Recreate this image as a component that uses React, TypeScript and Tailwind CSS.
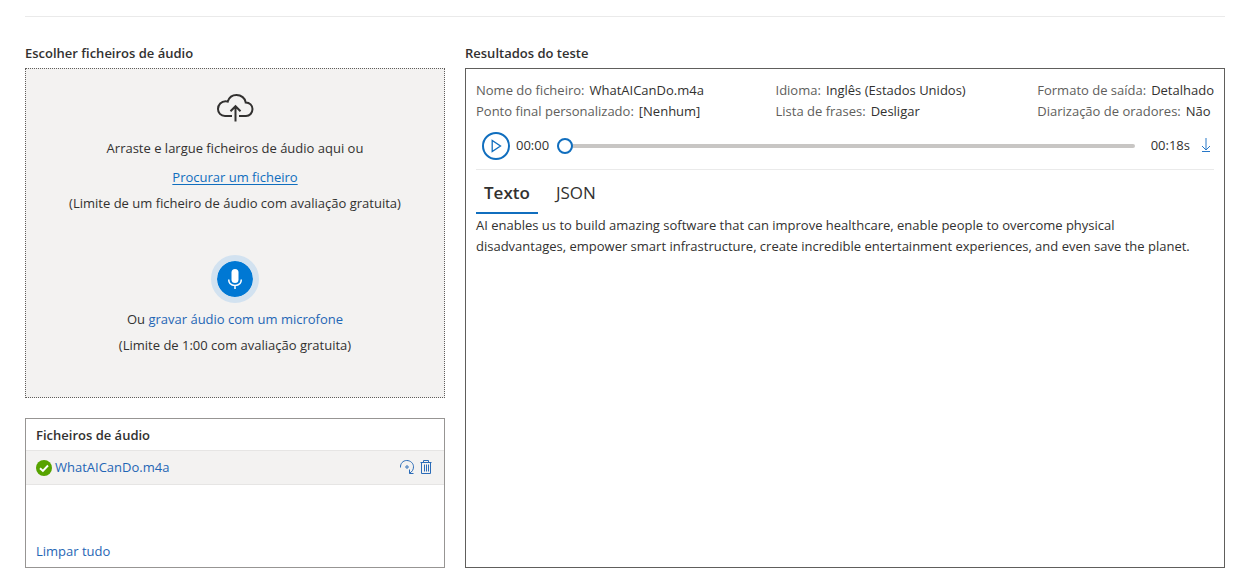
import { useState } from "react";

const transcript =
  "AI enables us to build amazing software that can improve healthcare, enable people to overcome physical disadvantages, empower smart infrastructure, create incredible entertainment experiences, and even save the planet.";

function CloudUpload() {
  return (
    <svg width="38" height="30" viewBox="0 0 38 30" fill="none" stroke="#323130" strokeWidth="2" aria-hidden="true">
      <path d="M16 23H9C4.700 23 2 19.800 2 15.900C2 11.600 5.400 8.200 9.500 8.200C10.300 8.200 11 8.300 11.700 8.600C13 4.700 16.500 2 20.500 2C25.200 2 29.200 5.200 29.700 9.400C33.700 9.400 36.500 12.400 36.500 16C36.500 20 33.700 23 30 23H23" />
      <path d="M19.500 28.500V13.500M14.500 18.200L19.500 13.200L24.500 18.200" />
    </svg>
  );
}

function Microphone() {
  return (
    <svg width="16" height="22" viewBox="0 0 16 22" fill="none" aria-hidden="true">
      <rect x="4.500" y="1" width="7" height="14" rx="3.500" fill="white" />
      <path d="M1.700 11.500C1.700 15.200 4.300 17.400 8 17.400C11.700 17.400 14.300 15.200 14.300 11.500M8 17.400V21" stroke="white" strokeWidth="1.500" />
    </svg>
  );
}

function Success() {
  return (
    <svg width="16" height="16" viewBox="0 0 16 16" fill="none" aria-hidden="true">
      <circle cx="8" cy="8" r="8" fill="#57a300" />
      <path d="M4 8.200L6.900 11L12 5.500" stroke="white" strokeWidth="1.900" />
    </svg>
  );
}

function Rerun() {
  return (
    <svg width="16" height="16" viewBox="0 0 16 16" fill="none" stroke="#2b6cb8" aria-hidden="true">
      <path d="M1.500 8.500C1.200 4.500 4 1.500 7.700 1.500C11.500 1.500 14.500 4.300 14.500 7.800C14.500 10.700 13 13 10.500 14.200" />
      <path d="M10.500 10.500V14.500H14.500" />
      <circle cx="8" cy="8" r="1.200" />
    </svg>
  );
}

function Trash() {
  return (
    <svg width="12" height="16" viewBox="0 0 12 16" fill="none" stroke="#2b6cb8" aria-hidden="true">
      <path d="M0.500 3.500H11.500M3.500 3V1.500H8.500V3M1.500 3.500V14.500H10.500V3.500M4.500 5.500V12.500M6.500 5.500V12.500M8.500 5.500V12.500" />
    </svg>
  );
}

function Field({ label, value }: { label: string; value: string }) {
  return (
    <div className="flex gap-[5px] whitespace-nowrap">
      <dt className="text-[#605e5c]">{label}</dt>
      <dd>{value}</dd>
    </div>
  );
}

export default function App() {
  const [tab, setTab] = useState<"text" | "json">("text");
  const [position, setPosition] = useState(0);

  return (
    <main className="bg-white pt-4 pr-5 pb-[10px] pl-[25px] font-['Open_Sans','Noto_Sans',sans-serif] text-[13px] leading-[21px] text-[#323130]">
      <hr className="border-[#eaeaea]" />
      <div className="mt-[26px] flex gap-5">
        <section className="flex w-[420px] shrink-0 flex-col">
          <h2 className="mb-1 font-semibold">Escolher ficheiros de áudio</h2>
          <div className="flex min-h-[330px] flex-col items-center border border-dotted border-[#605e5c] bg-[#f3f2f1] pt-6 text-center">
            <CloudUpload />
            <p className="mt-[15px]">Arraste e largue ficheiros de áudio aqui ou</p>
            <button type="button" className="mt-2 cursor-pointer text-[#106ebe] underline underline-offset-2">
              Procurar um ficheiro
            </button>
            <p className="mt-[5px]">(Limite de um ficheiro de áudio com avaliação gratuita)</p>
            <button
              type="button"
              aria-label="Gravar áudio"
              className="mt-[41px] flex size-12 cursor-pointer items-center justify-center rounded-full border-[6px] border-[#d2e2f0] bg-[#0078d4] bg-clip-padding"
            >
              <Microphone />
            </button>
            <p className="mt-[6px]">
              Ou{" "}
              <a href="#microfone" className="text-[#1f66b5]">
                gravar áudio com um microfone
              </a>
            </p>
            <p className="mt-[5px]">(Limite de 1:00 com avaliação gratuita)</p>
          </div>

          <section className="mt-5 flex min-h-[150px] flex-col border border-[#979593]">
            <h3 className="px-[10px] pt-[6px] pb-1 font-semibold">Ficheiros de áudio</h3>
            <div className="flex h-[35px] items-center border-y border-[#e6e5e4] bg-[#f3f2f1] px-[10px]">
              <Success />
              <a href="#ficheiro" className="ml-[3px] text-[#1f66b5]">
                WhatAICanDo.m4a
              </a>
              <div className="ml-auto flex gap-[5px] pr-[2px] pb-[2px]">
                <button type="button" aria-label="Repetir" className="cursor-pointer">
                  <Rerun />
                </button>
                <button type="button" aria-label="Eliminar" className="cursor-pointer">
                  <Trash />
                </button>
              </div>
            </div>
            <button type="button" className="mt-auto mb-[5px] ml-[10px] cursor-pointer self-start text-[#1f66b5]">
              Limpar tudo
            </button>
          </section>
        </section>

        <section className="flex min-w-0 flex-1 flex-col">
          <h2 className="mb-1 font-semibold">Resultados do teste</h2>
          <div className="flex-1 border border-[#605e5c] px-[10px] pt-[11px]">
            <dl className="flex justify-between">
              <div>
                <Field label="Nome do ficheiro:" value="WhatAICanDo.m4a" />
                <Field label="Ponto final personalizado:" value="[Nenhum]" />
              </div>
              <div>
                <Field label="Idioma:" value="Inglês (Estados Unidos)" />
                <Field label="Lista de frases:" value="Desligar" />
              </div>
              <div>
                <Field label="Formato de saída:" value="Detalhado" />
                <Field label="Diarização de oradores:" value="Não" />
              </div>
            </dl>

            <div className="flex h-12 items-center border-b border-[#eaeaea] pr-[2px] pl-[6px]">
              <button
                type="button"
                aria-label="Reproduzir"
                className="flex size-7 shrink-0 cursor-pointer items-center justify-center rounded-full border-2 border-[#106ebe]"
              >
                <svg width="12" height="14" viewBox="0 0 12 14" fill="none" stroke="#106ebe" strokeWidth="1.300" aria-hidden="true">
                  <path d="M2.200 1.500V12.500L10.500 7Z" />
                </svg>
              </button>
              <span className="ml-[6px] w-[35px] whitespace-nowrap">00:00</span>
              <input
                type="range"
                aria-label="Posição do áudio"
                min={0}
                max={18}
                value={position}
                onChange={(e) => setPosition(Number(e.target.value))}
                className="mx-[6px] h-4 min-w-0 flex-1 cursor-pointer appearance-none bg-transparent [&::-webkit-slider-runnable-track]:h-1 [&::-webkit-slider-runnable-track]:rounded-full [&::-webkit-slider-runnable-track]:bg-[#c8c6c4] [&::-webkit-slider-thumb]:-mt-[6px] [&::-webkit-slider-thumb]:size-4 [&::-webkit-slider-thumb]:appearance-none [&::-webkit-slider-thumb]:rounded-full [&::-webkit-slider-thumb]:border-2 [&::-webkit-slider-thumb]:border-solid [&::-webkit-slider-thumb]:border-[#106ebe] [&::-webkit-slider-thumb]:bg-white"
              />
              <span className="ml-[10px] whitespace-nowrap">00:18s</span>
              <a href="#transferir" aria-label="Transferir" className="ml-[10px]">
                <svg width="12" height="16" viewBox="0 0 12 16" fill="none" stroke="#2878c8" aria-hidden="true">
                  <path d="M6 0V12M2 8L6 12L10 8M2 13.500H10" />
                </svg>
              </a>
            </div>

            <div role="tablist" className="flex text-[17px] leading-6">
              <button
                type="button"
                role="tab"
                aria-selected={tab === "text"}
                onClick={() => setTab("text")}
                className={`h-11 cursor-pointer border-b-2 px-2 pt-1 ${tab === "text" ? "border-[#106ebe] font-semibold" : "border-transparent"}`}
              >
                Texto
              </button>
              <button
                type="button"
                role="tab"
                aria-selected={tab === "json"}
                onClick={() => setTab("json")}
                className={`ml-[10px] h-11 cursor-pointer border-b-2 px-2 pt-1 ${tab === "json" ? "border-[#106ebe] font-semibold" : "border-transparent"}`}
              >
                JSON
              </button>
            </div>
            {tab === "text" ? (
              <p className="pt-px pr-4">{transcript}</p>
            ) : (
              <pre className="pt-px font-['Liberation_Mono',monospace] whitespace-pre-wrap">{JSON.stringify({ DisplayText: transcript }, null, 2)}</pre>
            )}
          </div>
        </section>
      </div>
    </main>
  );
}
